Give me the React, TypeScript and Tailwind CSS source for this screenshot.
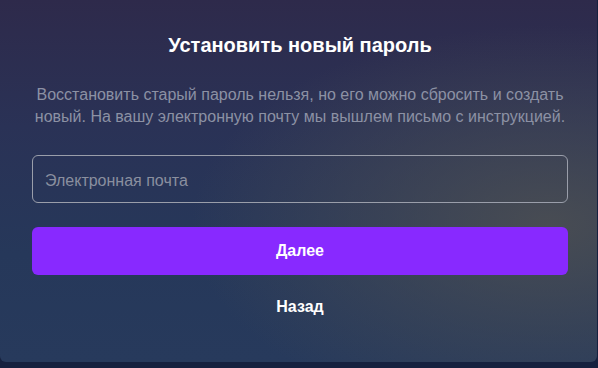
import React from "react";

export default function App() {
  return (
    <div className="w-[598px] h-[368px] overflow-hidden bg-[#16213f] font-['Liberation_Sans',Arial,sans-serif]">
      <div className="h-[362px] w-[597px] rounded-b-[6px] pl-8 pr-[29px] pt-[31px] flex flex-col items-stretch bg-[radial-gradient(ellipse_60%_55%_at_92%_62%,rgba(78,80,82,0.85),rgba(78,80,82,0)_100%),linear-gradient(180deg,#2e2a4b_0%,#2a3256_35%,#26385a_70%,#273a5c_100%)]">
        <h1 className="text-center text-[20px] leading-[28px] font-bold text-white">
          Установить новый пароль
        </h1>
        <p className="mt-[25px] text-center text-[16px] leading-[22px] text-[#8c91a4]">
          Восстановить старый пароль нельзя, но его можно сбросить и создать новый. На вашу электронную почту мы вышлем письмо с инструкцией.
        </p>
        <input
          type="email"
          placeholder="Электронная почта"
          className="mt-[27px] h-12 w-full rounded-[6px] border border-[#9a9eaa] bg-transparent px-3 pt-1 text-[16px] text-white placeholder:text-[#8a8f9f] outline-none"
        />
        <button className="mt-6 h-12 w-full rounded-[6px] bg-[#8829ff] text-[16px] font-bold text-white">
          Далее
        </button>
        <button className="mt-3 h-10 w-full text-[16px] font-bold text-white">
          Назад
        </button>
      </div>
    </div>
  );
}
